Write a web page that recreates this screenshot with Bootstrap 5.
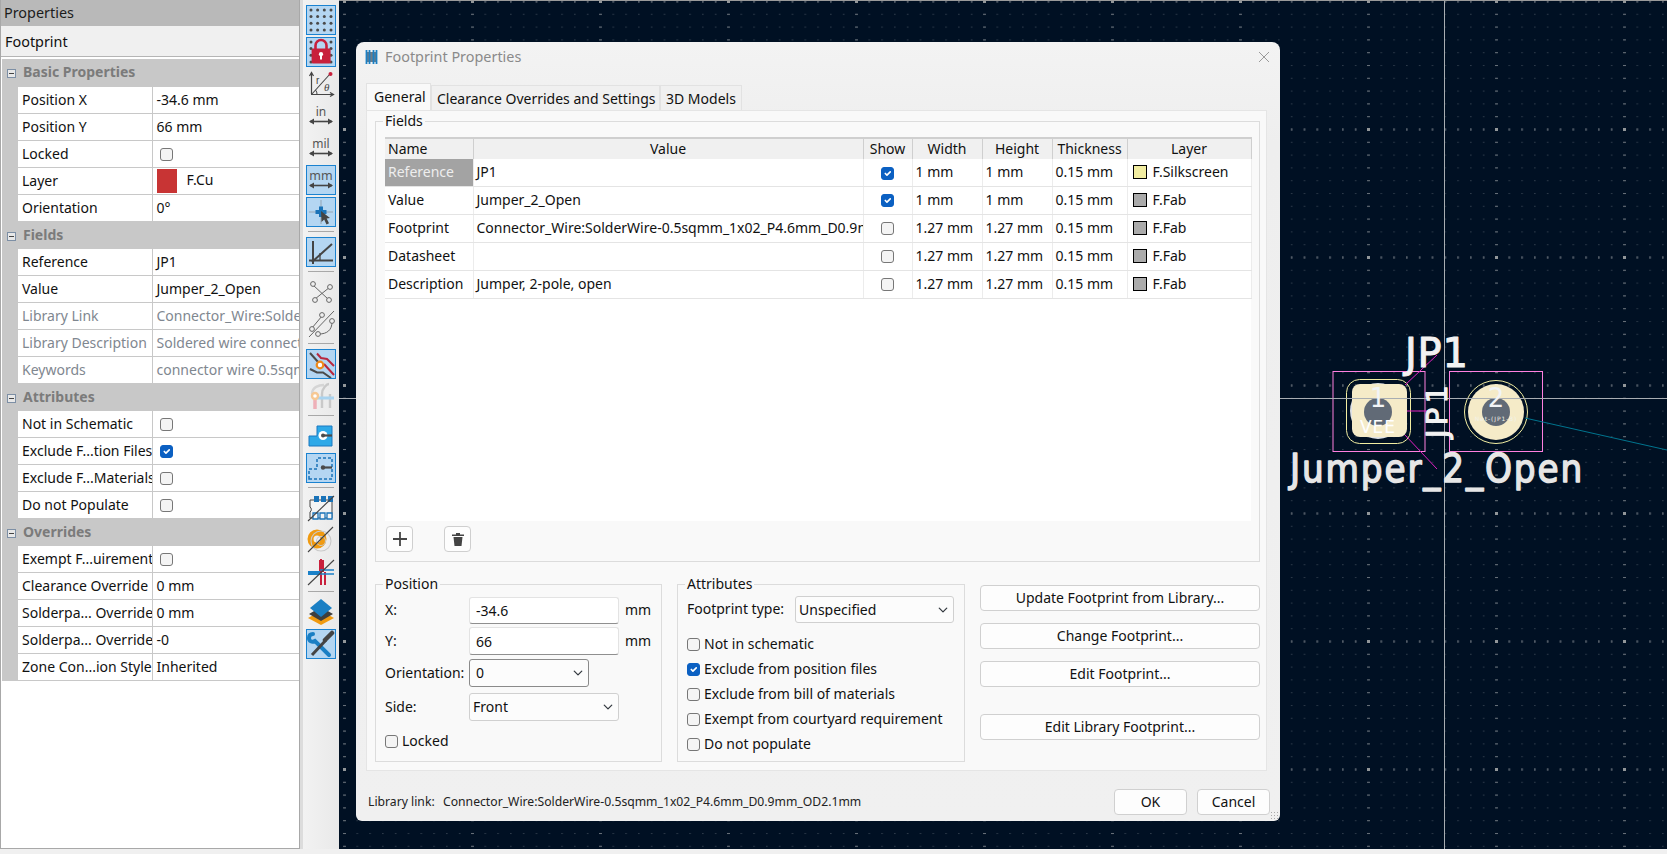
<!DOCTYPE html>
<html lang="en">
<head>
<meta charset="utf-8">
<title>Footprint Properties</title>
<link href="https://cdn.jsdelivr.net/npm/bootstrap@5.3.0/dist/css/bootstrap.min.css" rel="stylesheet">
<style>
html,body{height:854px;overflow:hidden;background:#f0f0f0;}
body{font-family:"Noto Sans","Open Sans",sans-serif;font-size:14px;color:#111;line-height:1.2;}
.shell{height:849px;}
.fixw{flex:none;}
.side{width:300px;background:#fff;border:1px solid #a8a8a8;border-top:0;}
.side-h{height:26px;background:#b9b9b9;padding-left:3px;font-size:14.4px;color:#1c1c1c;}
.side-s{height:31px;background:#f0f0f0;padding-left:4px;padding-top:2px;font-size:14.4px;border-bottom:1px solid #b5b5b5;}
.pg.table{table-layout:fixed;width:297px;margin:2px 0 0 1px;border-collapse:collapse;}
.c16{width:16px;}.c134{width:134px;}.c147{width:147px;}
.pg.table>tbody>tr>td{height:27px;padding:0 0 0 4px;white-space:nowrap;overflow:hidden;border:0;border-bottom:1px solid #c8c8c8;color:#111;background:#fff;vertical-align:middle;line-height:1;}
.pg.table>tbody>tr>td.nm{border-right:1px solid #c8c8c8;}
.pg.table>tbody>tr>td.gt{background:#c8c8c8;border-bottom-color:#c8c8c8;padding:0;}
.pg.table>tbody>tr>td.sec{background:#c8c8c8;border-bottom-color:#c8c8c8;color:#7b7b7b;font-weight:700;padding-left:5px;}
.pg.table>tbody>tr.dim>td:not(.gt){color:#7f8790;}
.expander{display:inline-block;width:9px;height:9px;border:1px solid #7d8fa5;background:#e8e8e8;position:relative;margin-right:7px;vertical-align:-1px;}
.expander::after{content:"";position:absolute;left:1px;right:1px;top:3px;height:1px;background:#444;}
.swatch{display:inline-block;width:20px;height:24px;background:#c83434;margin-right:10px;vertical-align:middle;}
.form-check-input.tick{width:13px;height:13px;margin:0;border:1px solid #777;border-radius:3px;background-color:#f4f4f4;float:none;vertical-align:middle;display:inline-block;}
.form-check-input.tick:checked{background-color:#0b60c2;border-color:#0b60c2;}
.form-check-input.tick.nudge{margin-left:3px;}
.rail{width:39px;background:linear-gradient(90deg,#dcdcdc 0,#dcdcdc 3px,#f2f2f2 3px,#e9e9e9 100%);padding:5px 0 0 6px;gap:2px;}
.rbtn{width:30px;height:30px;border:1px solid transparent;flex:none;display:block;}
.rbtn.on{background:#b4d6f2;border-color:#1a82d0;}
.rbtn svg{display:block;width:28px;height:28px;}
.rsep{width:26px;height:6px;margin-left:2px;flex:none;}
.rsep::before{content:"";display:block;height:1px;margin-top:2px;background:#a8a8a8;}
.board{background:#001023;min-width:0;}
.board>svg{display:block;width:1328px;height:849px;}
.dlg{position:absolute;left:17px;top:42px;width:924px;height:779px;background:linear-gradient(180deg,#f3f3f3 0,#eeeeee 100px,#f0f0f0 100%);border-radius:8px 8px 6px 6px;}
.dlg-t{height:30px;padding:0 10px 0 9px;color:#8a8a8a;font-size:14.4px;gap:7px;}
.dlg-x{width:12px;height:12px;}
.tabs.nav{margin:11px 13px 0 10px;height:27px;align-items:flex-end;border:0;flex-wrap:nowrap;}
.tabs .nav-link{border:1px solid #e2e2e2;border-bottom:0;border-radius:0;padding:0 0 0 5px;height:25px;line-height:25px;color:#111;background:#f0f0f0;margin:0;text-align:left;font-size:14px;white-space:nowrap;}
.tabs .nav-link.active{height:27px;line-height:25px;padding-left:7px;background:#f9f9f9;color:#111;border-color:#e2e2e2;margin:0;}
.tb1{width:65px;}.tb2{width:229px;}.tb3{width:82px;}
.pane{margin:0 13px 0 10px;height:661px;background:#f9f9f9;border:1px solid #e5e5e5;padding:10px 6px 0 8px;}
.grp{position:relative;border:1px solid #dcdcdc;}
.grp-l{position:absolute;left:7px;top:-9px;background:#f9f9f9;padding:0 2px;line-height:16px;}
.g-fields{height:441px;padding:15px 8px 0 9px;}
.sheet{height:384px;background:#fff;}
.fld.table{table-layout:fixed;width:866px;margin:0;border-collapse:collapse;}
.cn{width:88px;}.cv{width:390px;}.cs{width:49px;}.c70{width:70px;}.c75{width:75px;}.c124{width:124px;}
.fld.table>thead>tr>th{height:21px;padding:0;font-weight:400;text-align:center;background:#f0f0f0;color:#111;border:0;border-right:1px solid #cfcfcf;border-top:2px solid #cfcfcf;vertical-align:middle;line-height:1;}
.fld.table>thead>tr>th:first-child{text-align:left;padding-left:3px;}
.fld.table>tbody>tr>td{height:28px;padding:0 0 0 3px;white-space:nowrap;overflow:hidden;border:0;border-right:1px solid #ececec;border-bottom:1px solid #e4e4e4;background:#fff;color:#111;vertical-align:middle;line-height:1;}
.fld.table>tbody>tr:first-child>td{height:27px;}
.fld.table>tbody>tr>td.pick{background:#a3a3a3;color:#eee;}
.fld.table>tbody>tr>td.ctr{text-align:center;padding:0;}
.chip{display:inline-block;width:14px;height:14px;border:1px solid #000;background:#ababab;margin:0 6px 0 2px;vertical-align:-2px;}
.chip.y{background:#f2eda1;}
.toolrow{margin:5px 0 0 1px;}
.tool{width:27px;height:26px;padding:0;border:1px solid #cfcfcf;border-radius:4px;background:#fdfdfd;display:flex;align-items:center;justify-content:center;}
.del{margin-left:31px;}
.lower{margin-top:22px;}
.g-pos{width:287px;height:178px;padding:12px 0 0 9px;}
.g-att{width:288px;height:178px;margin-left:15px;padding:11px 0 0 9px;}
.lab{width:84px;flex:none;}
.frow{height:27px;}
.form-control.fx,.form-select.fx{height:27px;min-height:0;border-radius:3px;font-size:14px;line-height:1;color:#111;padding:0 0 0 6px;border:1px solid #e3e3e3;border-bottom-color:#8f8f8f;background-color:#fff;box-shadow:none;}
.form-select.fx{padding-left:3px;background-color:#fcfcfc;background-size:10px 10px;background-position:right 5px center;border-color:#d0d0d0;}
.form-select.fx.foc{border-color:#8a8a8a;padding-left:6px;}
.w150{width:150px;flex:none;}.w120{width:120px;flex:none;}.w159{width:159px;flex:none;}
.unit{margin-left:6px;}
.mt-frow{margin-top:3px;height:28px;}.mt-frow .form-control{height:28px;}
.mt-frow2{margin-top:4px;height:28px;}.mt-frow2 .form-select{height:28px;}
.mt-frow3{margin-top:6px;height:28px;}.mt-frow3 .form-select{height:28px;}
.lck{margin-top:12px;}
.ftl{width:108px;flex:none;}
.cklist{margin-top:9px;}
.chk{height:25px;gap:4px;}
.acts{width:280px;margin-left:15px;}
.act.btn{height:26px;padding:0;font-size:14px;line-height:1;color:#111;background:#fdfdfd;border:1px solid #d0d0d0;border-radius:4px;width:100%;}
.mt-act{margin-top:1px;}.mt-act2{margin-top:12px;}.mt-act3{margin-top:27px;}
.dlg-f{height:50px;padding:18px 0 0 12px;}
.lnk{font-size:12.2px;color:#222;padding-top:6px;}
.lnk-a{width:75px;flex:none;}
.act.btn.sm-b{width:73px;}
.me-ok{margin-right:10px;}.me-cn{margin-right:10px;}
.grip{position:absolute;right:2px;bottom:2px;width:8px;height:8px;background-image:radial-gradient(#aaa 1px,transparent 1px);background-size:3px 3px;}
.pcb-t{font-family:"DejaVu Sans",sans-serif;stroke-linejoin:round;}
</style>
</head>
<body>
<div class="shell d-flex">
  <div class="side fixw">
    <div class="side-h d-flex align-items-center">Properties</div>
    <div class="side-s d-flex align-items-center">Footprint</div>
    <table class="table pg">
      <colgroup><col class="c16"><col class="c134"><col class="c147"></colgroup>
      <tbody>
        <tr><td class="sec" colspan="3"><span class="expander"></span>Basic Properties</td></tr>
        <tr><td class="gt"></td><td class="nm">Position X</td><td>-34.6 mm</td></tr>
        <tr><td class="gt"></td><td class="nm">Position Y</td><td>66 mm</td></tr>
        <tr><td class="gt"></td><td class="nm">Locked</td><td><input class="form-check-input tick nudge" type="checkbox"></td></tr>
        <tr><td class="gt"></td><td class="nm">Layer</td><td><span class="swatch"></span>F.Cu</td></tr>
        <tr><td class="gt"></td><td class="nm">Orientation</td><td>0°</td></tr>
        <tr><td class="sec" colspan="3"><span class="expander"></span>Fields</td></tr>
        <tr><td class="gt"></td><td class="nm">Reference</td><td>JP1</td></tr>
        <tr><td class="gt"></td><td class="nm">Value</td><td>Jumper_2_Open</td></tr>
        <tr class="dim"><td class="gt"></td><td class="nm">Library Link</td><td>Connector_Wire:SolderWire-0.5sqmm_1x02</td></tr>
        <tr class="dim"><td class="gt"></td><td class="nm">Library Description</td><td>Soldered wire connection</td></tr>
        <tr class="dim"><td class="gt"></td><td class="nm">Keywords</td><td>connector wire 0.5sqmm</td></tr>
        <tr><td class="sec" colspan="3"><span class="expander"></span>Attributes</td></tr>
        <tr><td class="gt"></td><td class="nm">Not in Schematic</td><td><input class="form-check-input tick nudge" type="checkbox"></td></tr>
        <tr><td class="gt"></td><td class="nm">Exclude F...tion Files</td><td><input class="form-check-input tick nudge" type="checkbox" checked></td></tr>
        <tr><td class="gt"></td><td class="nm">Exclude F...Materials</td><td><input class="form-check-input tick nudge" type="checkbox"></td></tr>
        <tr><td class="gt"></td><td class="nm">Do not Populate</td><td><input class="form-check-input tick nudge" type="checkbox"></td></tr>
        <tr><td class="sec" colspan="3"><span class="expander"></span>Overrides</td></tr>
        <tr><td class="gt"></td><td class="nm">Exempt F...uirement</td><td><input class="form-check-input tick nudge" type="checkbox"></td></tr>
        <tr><td class="gt"></td><td class="nm">Clearance Override</td><td>0 mm</td></tr>
        <tr><td class="gt"></td><td class="nm">Solderpa... Override</td><td>0 mm</td></tr>
        <tr><td class="gt"></td><td class="nm">Solderpa... Override</td><td>-0</td></tr>
        <tr><td class="gt"></td><td class="nm">Zone Con...ion Style</td><td>Inherited</td></tr>
      </tbody>
    </table>
  </div>

  <div class="rail d-flex flex-column fixw">
    <span class="rbtn on"><svg viewBox="0 0 28 28"><g fill="#4a4a4a"><circle cx="4" cy="4" r="1.5"/><circle cx="10.6" cy="4" r="1.5"/><circle cx="17.3" cy="4" r="1.5"/><circle cx="24" cy="4" r="1.5"/><circle cx="4" cy="10.6" r="1.5"/><circle cx="10.6" cy="10.6" r="1.5"/><circle cx="17.3" cy="10.6" r="1.5"/><circle cx="24" cy="10.6" r="1.5"/><circle cx="4" cy="17.3" r="1.5"/><circle cx="10.6" cy="17.3" r="1.5"/><circle cx="17.3" cy="17.3" r="1.5"/><circle cx="24" cy="17.3" r="1.5"/><circle cx="4" cy="24" r="1.5"/><circle cx="10.6" cy="24" r="1.5"/><circle cx="17.3" cy="24" r="1.5"/><circle cx="24" cy="24" r="1.5"/></g></svg></span>
    <span class="rbtn on"><svg viewBox="0 0 28 28"><g fill="#4a4a4a"><circle cx="4" cy="4" r="1.5"/><circle cx="24" cy="4" r="1.5"/><circle cx="4" cy="10.6" r="1.5"/><circle cx="24" cy="10.6" r="1.5"/><circle cx="4" cy="17.3" r="1.5"/><circle cx="24" cy="17.3" r="1.5"/><circle cx="4" cy="24" r="1.5"/><circle cx="24" cy="24" r="1.5"/></g><path d="M8.5 11V7.5a5.500 5.500 0 0 1 11 0V11" fill="none" stroke="#c8203c" stroke-width="2.600"/><rect x="4.600" y="10.500" width="19" height="15" rx="1.500" fill="#c8203c"/><circle cx="14" cy="16.200" r="2.100" fill="#fff"/><rect x="13" y="16.500" width="2" height="5" fill="#fff"/></svg></span>
    <span class="rbtn"><svg viewBox="0 0 28 28" fill="none" stroke="#444"><path d="M4.500 24V3M2.500 6 4.500 2.500 6.500 6M4 24.500H26M23 22.500 26.500 24.500 23 26.500" stroke-width="1.200"/><path d="M4.500 24.500 23 4" stroke-width="1.100"/><circle cx="23.500" cy="4" r="2" fill="#c8203c" stroke="none"/><path d="M10 24.500a6 6 0 0 0-1.500-4.500" stroke-width="1"/><text x="9" y="14" font-family="Liberation Sans" font-size="10" fill="#444" stroke="none">r</text><text x="17" y="21" font-family="Liberation Serif" font-style="italic" font-size="11" fill="#444" stroke="none">θ</text></svg></span>
    <span class="rbtn"><svg viewBox="0 0 28 28"><text x="14" y="14" text-anchor="middle" font-family="Noto Sans" font-size="12" fill="#555">in</text><path d="M3 19.500H25" stroke="#444" stroke-width="1.600"/><path d="M2 19.500 7 16.500V22.500ZM26 19.500 21 16.500V22.500Z" fill="#444"/></svg></span>
    <span class="rbtn"><svg viewBox="0 0 28 28"><text x="14" y="14" text-anchor="middle" font-family="Noto Sans" font-size="12" fill="#555">mil</text><path d="M3 19.500H25" stroke="#444" stroke-width="1.600"/><path d="M2 19.500 7 16.500V22.500ZM26 19.500 21 16.500V22.500Z" fill="#444"/></svg></span>
    <span class="rbtn on"><svg viewBox="0 0 28 28"><text x="14" y="14" text-anchor="middle" font-family="Noto Sans" font-size="12.500" fill="#555">mm</text><path d="M3 19.500H25" stroke="#444" stroke-width="1.600"/><path d="M2 19.500 7 16.500V22.500ZM26 19.500 21 16.500V22.500Z" fill="#444"/></svg></span>
    <span class="rbtn on"><svg viewBox="0 0 28 28"><path d="M14 2V26M2 14H26" stroke="#8e9aa5" stroke-width=".8"/><path d="M14 8.500V19M8.500 14H19.500" stroke="#1a73b8" stroke-width="4"/><path d="M14 13 14.500 24 17.200 21.500 19.500 26.500 22 25.300 19.700 20.500 23 20Z" fill="#444"/></svg></span>
    <div class="rsep"></div>
    <span class="rbtn on"><svg viewBox="0 0 28 28" fill="none" stroke="#444" stroke-width="2"><path d="M6 3V26M2 22.500H26"/><path d="M5 24 25 6"/><path d="M13 15V22" stroke-width="1.300"/></svg></span>
    <div class="rsep"></div>
    <span class="rbtn"><svg viewBox="0 0 28 28" fill="none" stroke="#666" stroke-width="1"><path d="M6 7 21 21M23 9 8 21"/><circle cx="6" cy="6" r="2.400" fill="#f0f0f0"/><circle cx="23" cy="9" r="2.400" fill="#f0f0f0"/><circle cx="8" cy="22" r="2.400" fill="#f0f0f0"/><circle cx="22" cy="22" r="2.400" fill="#f0f0f0"/></svg></span>
    <span class="rbtn"><svg viewBox="0 0 28 28" fill="none" stroke="#666" stroke-width="1"><path d="M2 27 27 1"/><path d="M5 18 15 6M12 24C20 24 25 20 25 12"/><circle cx="5" cy="19" r="2.400" fill="#f0f0f0"/><circle cx="15" cy="5" r="2.400" fill="#f0f0f0"/><circle cx="11" cy="24" r="2.400" fill="#f0f0f0"/><circle cx="25" cy="11" r="2.400" fill="#f0f0f0"/></svg></span>
    <div class="rsep"></div>
    <span class="rbtn on"><svg viewBox="0 0 28 28" fill="none" stroke-width="2"><path d="M10 3.500 14 8 20 9 27 16M17 14 27 25" stroke="#b8283f"/><path d="M3 3 12 13M3 19 10 22.500H16L24 28" stroke="#4a4a4a"/><circle cx="13" cy="15" r="3.300" stroke="#ee8a1a" stroke-width="2.200" fill="#fff"/></svg></span>
    <span class="rbtn"><svg viewBox="0 0 28 28" fill="none" stroke-width="2.400"><path d="M5 12C5 5 12 3 17 3" stroke="#d5d5d5"/><path d="M15 26V12C15 6 20 2 22 2M23 26V12" stroke="#c9c9c9"/><path d="M8 16H27" stroke="#a9d3ef" stroke-width="3"/><path d="M8 18V27" stroke="#eeb0b8" stroke-width="3.500"/><circle cx="8" cy="14" r="3" stroke="#f6c894" fill="#fff"/></svg></span>
    <div class="rsep"></div>
    <span class="rbtn"><svg viewBox="0 0 28 28"><path d="M2 14H10V4H25V24H2Z" fill="#2ea9e8" stroke="#1a78c0" stroke-width="1"/><circle cx="16" cy="13.500" r="4.500" fill="#fff"/><path d="M15 13.500H25" stroke="#4a4a4a" stroke-width="2.200"/><circle cx="16" cy="13.500" r="2" fill="#4a4a4a"/></svg></span>
    <span class="rbtn on"><svg viewBox="0 0 28 28"><path d="M2 25V15H10V4H25V25Z" fill="none" stroke="#1a73b8" stroke-width="1.500" stroke-dasharray="3 2"/><path d="M15 13.500H25" stroke="#4a4a4a" stroke-width="2.200"/><circle cx="16" cy="13.500" r="2.200" fill="#4a4a4a"/></svg></span>
    <div class="rsep"></div>
    <span class="rbtn"><svg viewBox="0 0 28 28"><path d="M3 6H25V24H3V18A3 3 0 0 0 3 13Z" fill="#f4f4f4" stroke="#444" stroke-width="1"/><path d="M7 2H12V8H7ZM14 2H19V8H14ZM21 2H26V8H21Z" fill="#1a73b8"/><path d="M6 19H11V25H6ZM13 19H18V25H13ZM20 19H25V25H20Z" fill="#f4f4f4" stroke="#1a73b8" stroke-width="1.300"/><path d="M1 27 27 2" stroke="#444" stroke-width="1.100"/></svg></span>
    <span class="rbtn"><svg viewBox="0 0 28 28" fill="none"><circle cx="10" cy="13" r="6.500" stroke="#f09a10" stroke-width="6"/><circle cx="14" cy="15" r="10" stroke="#c9c9c9" stroke-width="1.100"/><circle cx="14" cy="15" r="4.500" stroke="#c9c9c9" stroke-width="1.100"/><path d="M1 26 26 1" stroke="#444" stroke-width="1.100"/></svg></span>
    <span class="rbtn"><svg viewBox="0 0 28 28" fill="none"><path d="M14 1V27M18 14V27" stroke="#c8203c" stroke-width="2"/><path d="M12 2H17V14H12Z" fill="#c8203c"/><path d="M1 15H13" stroke="#1a80c8" stroke-width="4"/><path d="M13 12H27M13 16H27" stroke="#1a80c8" stroke-width="1.300"/><path d="M1 27 27 2" stroke="#444" stroke-width="1.100"/></svg></span>
    <div class="rsep"></div>
    <span class="rbtn"><svg viewBox="0 0 28 28"><path d="M14 13 27 20 14 27 1 20Z" fill="#f09a10"/><path d="M14 9 26 16 14 23 2 16Z" fill="#3f3f3f"/><path d="M14 1 25 10 14 19 3 10Z" fill="#1a7fc4"/></svg></span>
    <span class="rbtn on"><svg viewBox="0 0 28 28" fill="none"><path d="M6 4C3 4 2 6 2 8 2 11 5 13 8 11L22 25" stroke="#1a7fc4" stroke-width="4" stroke-linecap="round"/><path d="M5 25 19 10" stroke="#444" stroke-width="3"/><path d="M18 10 25 3" stroke="#444" stroke-width="4.500" stroke-linecap="round"/></svg></span>
  </div>

  <div class="board flex-grow-1 position-relative">
    <svg viewBox="339 0 1328 849" xmlns="http://www.w3.org/2000/svg">
      <defs>
        <pattern id="d0" width="12.8" height="12.8" patternUnits="userSpaceOnUse"><rect x="11.200" y="1" width="1" height="1" fill="#4a5663"/></pattern>
        <pattern id="d1" width="128" height="12.8" patternUnits="userSpaceOnUse"><rect x="87" y="1" width="3" height="1" fill="#687079"/></pattern>
        <pattern id="d2" width="12.8" height="128" patternUnits="userSpaceOnUse"><rect x="11.200" y="0" width="1" height="3" fill="#687079"/></pattern>
        <pattern id="d3" width="128" height="128" patternUnits="userSpaceOnUse"><rect x="87" y="0" width="3" height="3" fill="#929699"/></pattern>
      </defs>
      <g shape-rendering="crispEdges">
        <rect x="339" width="1328" height="849" fill="url(#d0)"/>
        <rect x="339" width="1328" height="849" fill="url(#d1)"/>
        <rect x="339" width="1328" height="849" fill="url(#d2)"/>
        <rect x="339" width="1328" height="849" fill="url(#d3)"/>
        <rect x="339" width="1328" height="1" fill="#9a9a9a"/>
      </g>
      <circle cx="1378" cy="411" r="28" fill="#dfe2e6"/>
      <rect x="1352" y="384" width="55" height="53" rx="8" fill="#f5ebc8"/>
      <circle cx="1378" cy="412" r="14" fill="#616a76"/>
      <rect x="1346.500" y="379.500" width="64" height="64" rx="13" fill="none" stroke="#f2eda1"/>
      <circle cx="1496" cy="412" r="31.500" fill="none" stroke="#f2eda1"/>
      <circle cx="1496" cy="412" r="28" fill="#f5ebc8"/>
      <circle cx="1496" cy="412" r="14" fill="#616a76"/>
      <g fill="none" stroke="#ff80e0">
        <rect x="1333" y="371.500" width="92" height="80"/>
        <rect x="1449.500" y="371.500" width="93" height="80"/>
      </g>
      <g stroke="#e020c0" fill="none">
        <path d="M1437 355 1405 385M1405 435 1437 469"/>
        <path d="M1407 411H1428"/>
      </g>
      <path d="M1525 418 1667 450" stroke="#00758f" fill="none"/>
      <path d="M339 398.500H1667M1444.500 1V849" stroke="#a8adb2" fill="none"/>
      <g class="pcb-t" text-anchor="middle">
        <text x="1378" y="407" font-size="26" fill="#f2f4f6">1</text>
        <text x="1378" y="433" font-size="17" letter-spacing="1" fill="#fff">VEE</text>
        <text x="1496" y="407" font-size="26" fill="#f2f4f6">2</text>
        <text x="1496" y="421" font-size="6" letter-spacing=".9" fill="#f2f2e8">Net-(JP1-B)</text>
      </g>
      <g class="pcb-t" fill="#f2f2f2" stroke="#f2f2f2" stroke-width="1">
        <text x="1405" y="367" font-size="40" textLength="63">JP1</text>
        <text transform="translate(1447 438) rotate(-90)" font-size="29" textLength="53">JP1</text>
        <text transform="translate(1290 482) scale(.88 1)" font-size="39" textLength="332" fill="#e6e6e6" stroke="#e6e6e6" stroke-width="1.500">Jumper_2_Open</text>
      </g>
    </svg>

    <div class="dlg d-flex flex-column">
      <div class="dlg-t d-flex align-items-center">
        <svg width="13" height="14" viewBox="0 0 13 14"><rect x="1" y="2" width="11" height="10" fill="#6f7b86"/><path d="M1.500 0V14M4.500 0V14M8.500 0V14M11.500 0V14" stroke="#1a7fc4" stroke-width="1.800"/></svg>
        <span class="flex-grow-1">Footprint Properties</span>
        <svg class="dlg-x" viewBox="0 0 12 12"><path d="M1 1 11 11M11 1 1 11" stroke="#9a9a9a" fill="none"/></svg>
      </div>
      <ul class="nav nav-tabs tabs">
        <li class="nav-item"><a class="nav-link active tb1" href="#">General</a></li>
        <li class="nav-item"><a class="nav-link tb2" href="#">Clearance Overrides and Settings</a></li>
        <li class="nav-item"><a class="nav-link tb3" href="#">3D Models</a></li>
      </ul>
      <div class="pane">
        <div class="grp g-fields">
          <span class="grp-l">Fields</span>
          <div class="sheet">
            <table class="table fld">
              <colgroup><col class="cn"><col class="cv"><col class="cs"><col class="c70"><col class="c70"><col class="c75"><col class="c124"></colgroup>
              <thead><tr><th>Name</th><th>Value</th><th>Show</th><th>Width</th><th>Height</th><th>Thickness</th><th>Layer</th></tr></thead>
              <tbody>
                <tr><td class="pick">Reference</td><td>JP1</td><td class="ctr"><input class="form-check-input tick" type="checkbox" checked></td><td>1 mm</td><td>1 mm</td><td>0.15 mm</td><td><span class="chip y"></span>F.Silkscreen</td></tr>
                <tr><td>Value</td><td>Jumper_2_Open</td><td class="ctr"><input class="form-check-input tick" type="checkbox" checked></td><td>1 mm</td><td>1 mm</td><td>0.15 mm</td><td><span class="chip"></span>F.Fab</td></tr>
                <tr><td>Footprint</td><td>Connector_Wire:SolderWire-0.5sqmm_1x02_P4.6mm_D0.9mm_OD2.1mm</td><td class="ctr"><input class="form-check-input tick" type="checkbox"></td><td>1.27 mm</td><td>1.27 mm</td><td>0.15 mm</td><td><span class="chip"></span>F.Fab</td></tr>
                <tr><td>Datasheet</td><td></td><td class="ctr"><input class="form-check-input tick" type="checkbox"></td><td>1.27 mm</td><td>1.27 mm</td><td>0.15 mm</td><td><span class="chip"></span>F.Fab</td></tr>
                <tr><td>Description</td><td>Jumper, 2-pole, open</td><td class="ctr"><input class="form-check-input tick" type="checkbox"></td><td>1.27 mm</td><td>1.27 mm</td><td>0.15 mm</td><td><span class="chip"></span>F.Fab</td></tr>
              </tbody>
            </table>
          </div>
          <div class="d-flex toolrow">
            <span class="tool"><svg width="16" height="16" viewBox="0 0 16 16"><path d="M8 1V15M1 8H15" stroke="#444" stroke-width="1.800"/></svg></span>
            <span class="tool del"><svg width="14" height="14" viewBox="0 0 14 14"><path d="M1 2.500H13V4H1ZM5 1H9V2.500H5ZM2.500 5H11.500L10.500 14H3.500Z" fill="#444"/></svg></span>
          </div>
        </div>
        <div class="lower d-flex">
          <div class="grp g-pos">
            <span class="grp-l">Position</span>
            <div class="frow d-flex align-items-center"><span class="lab">X:</span><input class="form-control fx w150" value="-34.6"><span class="unit">mm</span></div>
            <div class="frow d-flex align-items-center mt-frow"><span class="lab">Y:</span><input class="form-control fx w150" value="66"><span class="unit">mm</span></div>
            <div class="frow d-flex align-items-center mt-frow2"><span class="lab">Orientation:</span><select class="form-select fx foc w120"><option>0</option></select></div>
            <div class="frow d-flex align-items-center mt-frow3"><span class="lab">Side:</span><select class="form-select fx w150"><option>Front</option></select></div>
            <div class="d-flex align-items-center gap-1 lck"><input class="form-check-input tick" type="checkbox"><span>Locked</span></div>
          </div>
          <div class="grp g-att">
            <span class="grp-l">Attributes</span>
            <div class="frow d-flex align-items-center"><span class="ftl">Footprint type:</span><select class="form-select fx w159"><option>Unspecified</option></select></div>
            <div class="d-flex flex-column cklist">
              <div class="chk d-flex align-items-center"><input class="form-check-input tick" type="checkbox"><span>Not in schematic</span></div>
              <div class="chk d-flex align-items-center"><input class="form-check-input tick" type="checkbox" checked><span>Exclude from position files</span></div>
              <div class="chk d-flex align-items-center"><input class="form-check-input tick" type="checkbox"><span>Exclude from bill of materials</span></div>
              <div class="chk d-flex align-items-center"><input class="form-check-input tick" type="checkbox"><span>Exempt from courtyard requirement</span></div>
              <div class="chk d-flex align-items-center"><input class="form-check-input tick" type="checkbox"><span>Do not populate</span></div>
            </div>
          </div>
          <div class="acts d-flex flex-column">
            <button class="btn act mt-act" type="button">Update Footprint from Library...</button>
            <button class="btn act mt-act2" type="button">Change Footprint...</button>
            <button class="btn act mt-act2" type="button">Edit Footprint...</button>
            <button class="btn act mt-act3" type="button">Edit Library Footprint...</button>
          </div>
        </div>
      </div>
      <div class="dlg-f d-flex">
        <div class="lnk flex-grow-1 d-flex"><span class="lnk-a">Library link:</span><span>Connector_Wire:SolderWire-0.5sqmm_1x02_P4.6mm_D0.9mm_OD2.1mm</span></div>
        <button class="btn act sm-b me-ok" type="button">OK</button>
        <button class="btn act sm-b me-cn" type="button">Cancel</button>
      </div>
      <div class="grip"></div>
    </div>
  </div>
</div>
</body>
</html>
